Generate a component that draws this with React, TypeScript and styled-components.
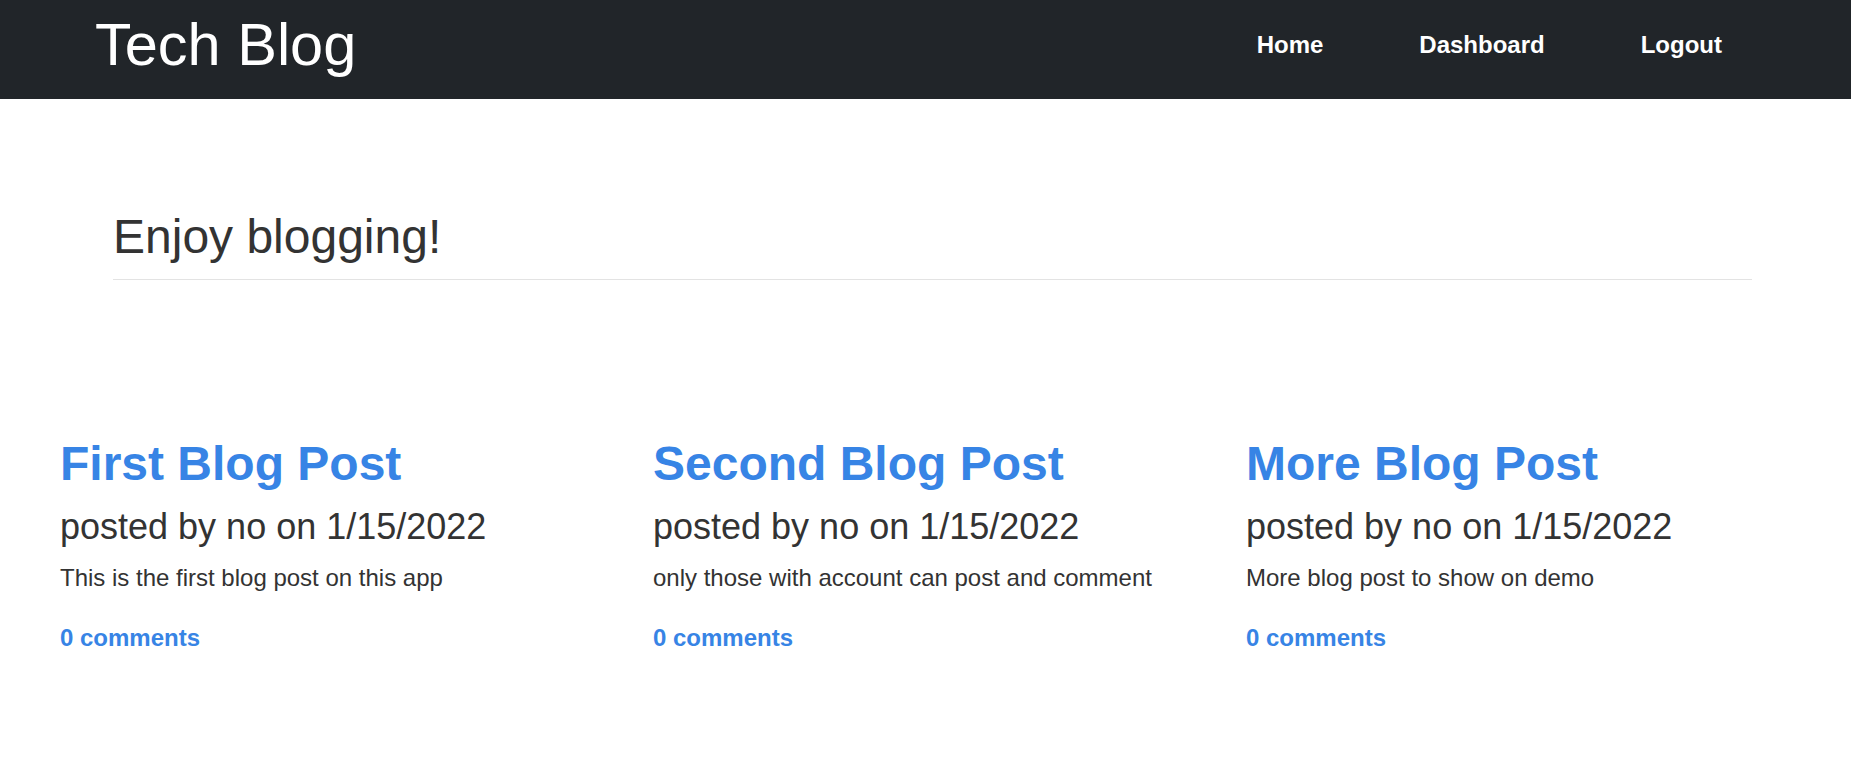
import React from "react";
import styled, { createGlobalStyle } from "styled-components";

const GlobalStyle = createGlobalStyle`
  html, body {
    margin: 0;
    padding: 0;
    background: #ffffff;
    font-family: "Liberation Sans", Arial, Helvetica, sans-serif;
    color: #333333;
  }
  * { box-sizing: border-box; }
`;

const Header = styled.header`
  height: 99px;
  background: #212529;
  display: flex;
  align-items: flex-start;
  justify-content: space-between;
  padding: 0 129px 0 95px;
`;

const Brand = styled.a`
  margin-top: 15px;
  font-size: 59.5px;
  line-height: 59.5px;
  color: #ffffff;
  text-decoration: none;
  white-space: nowrap;
`;

const Nav = styled.nav`
  margin-top: 33px;
  display: flex;
  gap: 96px;
`;

const NavLink = styled.a`
  font-size: 24px;
  line-height: 24px;
  font-weight: 700;
  color: #ffffff;
  text-decoration: none;
  white-space: nowrap;
`;

const Intro = styled.section`
  padding: 112px 99px 0 113px;
`;

const IntroTitle = styled.h1`
  margin: 0;
  font-size: 48px;
  line-height: 1.1;
  font-weight: 400;
  color: #333333;
  padding-bottom: 15px;
  border-bottom: 1px solid #e3e3e3;
`;

const PostGrid = styled.section`
  display: grid;
  grid-template-columns: repeat(3, 593px);
  padding: 158px 0 0 60px;
`;

const PostCard = styled.article`
  display: flex;
  flex-direction: column;
  align-items: flex-start;
`;

const PostTitle = styled.a`
  font-size: 48px;
  line-height: 1.1;
  font-weight: 700;
  color: #3784e5;
  text-decoration: none;
  white-space: nowrap;
`;

const PostMeta = styled.h3`
  margin: 14px 0 0;
  font-size: 36px;
  line-height: 1.2;
  font-weight: 400;
  color: #333333;
  white-space: nowrap;
`;

const PostBody = styled.p`
  margin: 12px 0 0;
  font-size: 24px;
  line-height: 36px;
  color: #333333;
  white-space: nowrap;
`;

const CommentLink = styled.a`
  margin-top: 24px;
  font-size: 24px;
  line-height: 36px;
  font-weight: 700;
  color: #3784e5;
  text-decoration: none;
`;

const posts = [
  { title: "First Blog Post", body: "This is the first blog post on this app" },
  { title: "Second Blog Post", body: "only those with account can post and comment" },
  { title: "More Blog Post", body: "More blog post to show on demo" },
];

export default function App() {
  return (
    <>
      <GlobalStyle />
      <Header>
        <Brand href="#">Tech Blog</Brand>
        <Nav>
          <NavLink href="#">Home</NavLink>
          <NavLink href="#">Dashboard</NavLink>
          <NavLink href="#">Logout</NavLink>
        </Nav>
      </Header>
      <Intro>
        <IntroTitle>Enjoy blogging!</IntroTitle>
      </Intro>
      <PostGrid>
        {posts.map((p) => (
          <PostCard key={p.title}>
            <PostTitle href="#">{p.title}</PostTitle>
            <PostMeta>posted by no on 1/15/2022</PostMeta>
            <PostBody>{p.body}</PostBody>
            <CommentLink href="#">0 comments</CommentLink>
          </PostCard>
        ))}
      </PostGrid>
    </>
  );
}
